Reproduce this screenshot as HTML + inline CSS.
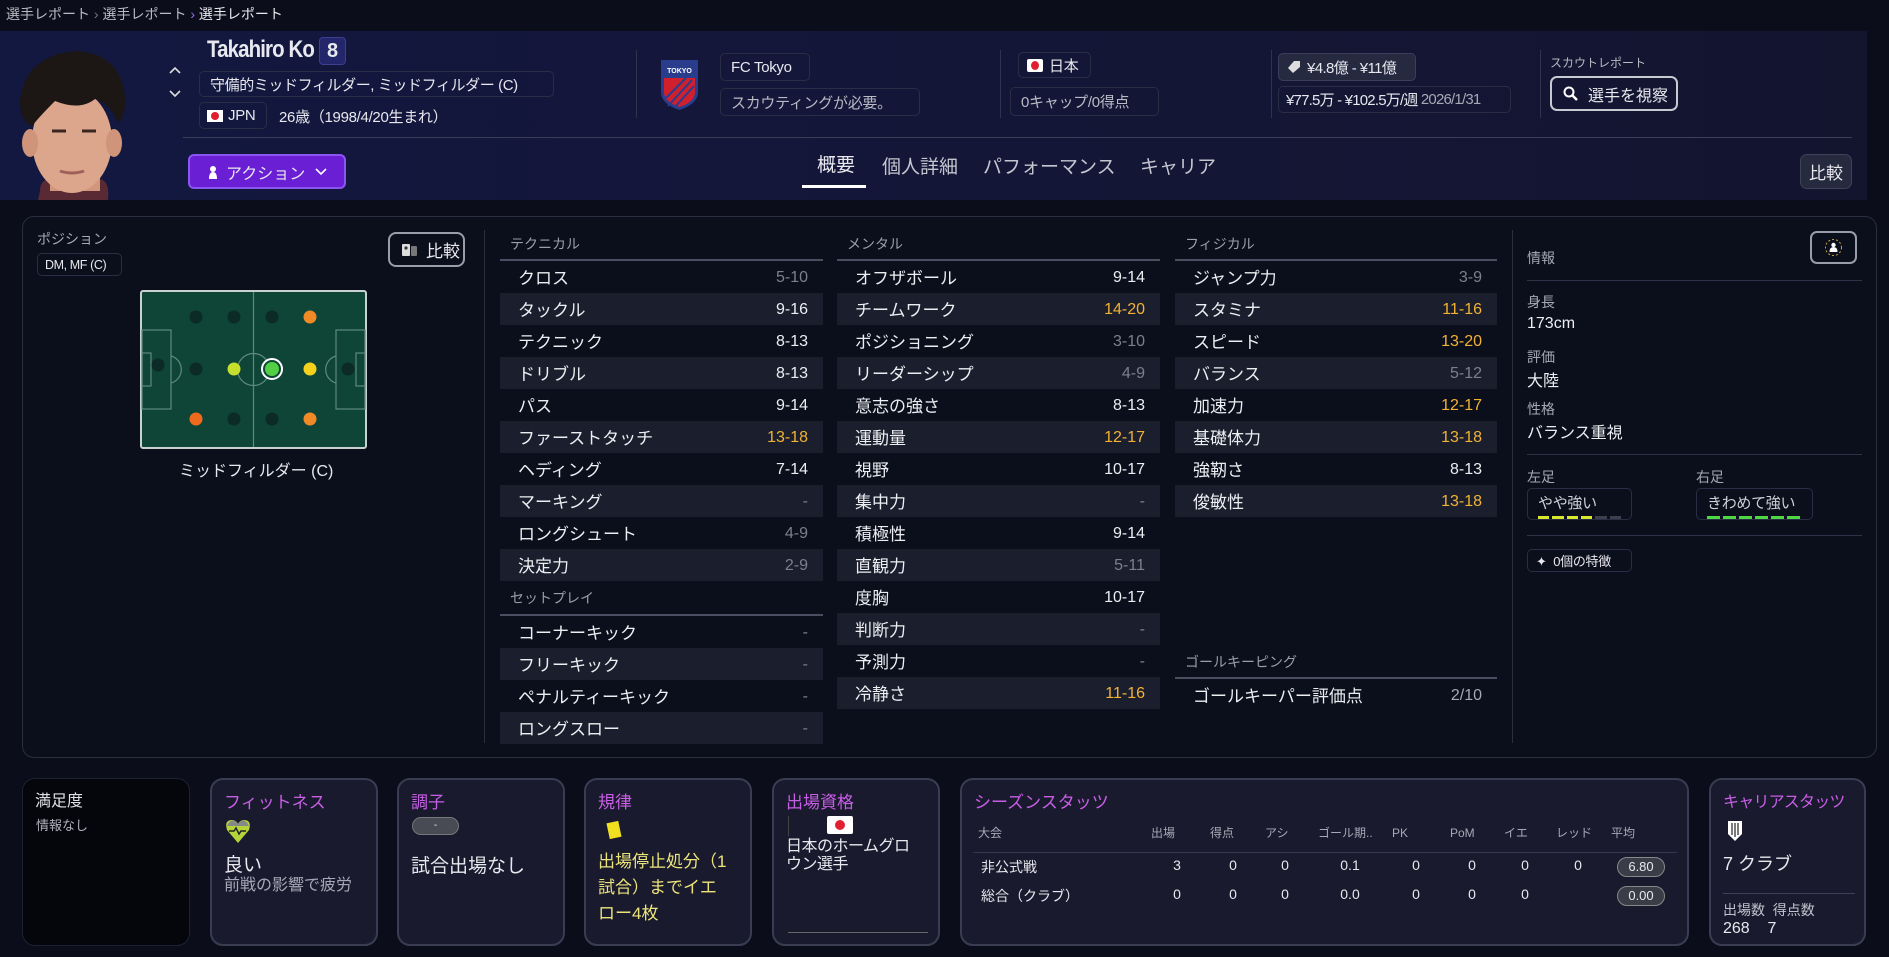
<!DOCTYPE html>
<html><head><meta charset="utf-8">
<style>
*{box-sizing:border-box;margin:0;padding:0}
body{width:1889px;height:957px;background:#0b0e1a;color:#e8e8ee;font-family:"Liberation Sans","Noto Sans CJK JP",sans-serif;position:relative;overflow:hidden;white-space:nowrap}
.a{position:absolute}
.pill{position:absolute;border:1px solid #2a2e44;border-radius:5px;display:flex;align-items:center;padding:0 10px;font-size:15px;color:#e8e8ee;letter-spacing:-0.3px;overflow:hidden}
.sep{position:absolute;width:1px;background:#2e3350}
.col{position:absolute}
.col .h{height:32px;font-size:14px;color:#9a9eab;display:flex;align-items:center;padding-left:10px;border-bottom:2px solid #4a4e60}
.r{height:32px;display:flex;justify-content:space-between;align-items:center;padding:0 15px 0 18px;font-size:17px;color:#eceef2;line-height:32px}
.r span:first-child{position:relative;top:2px}
.r span:last-child{font-size:16px;position:relative;top:1px}
.g{color:#7c808c}.o{color:#f2b335}
.card{position:absolute;top:778px;height:168px;background:#1a1a2e;border:2px solid #3a3c52;border-radius:13px;overflow:hidden}
.ct{position:absolute;left:12px;top:8px;font-size:17px;color:#c85ee6}
.lbl{font-size:14px;color:#a6a9b5;position:absolute}
.val{font-size:16px;color:#eceef2;position:absolute}
.th{position:absolute;top:826px;font-size:12px;color:#a6a9b5;line-height:14px}
.td{position:absolute;font-size:14px;color:#e8e8ee;transform:translateX(-50%)}
</style></head><body>
<div class="a" style="left:6px;top:4px;font-size:14px;color:#b8bac4">選手レポート <span style="color:#777">›</span> 選手レポート <span style="color:#9b6cf0">›</span> <span style="color:#e8e8ee">選手レポート</span></div>

<div class="a" style="left:0;top:31px;width:1867px;height:169px;background:linear-gradient(90deg,#121840 0%,#14163a 40%,#13152f 100%)"></div>
<svg class="a" style="left:0;top:31px" width="150" height="169" viewBox="0 0 150 169">
<path d="M40 160 Q40 150 48 148 L100 148 Q110 150 108 169 L38 169Z" fill="#5a2a34"/>
<rect x="50" y="120" width="50" height="40" fill="#d2967c"/>
<ellipse cx="72" cy="110" rx="40" ry="52" fill="#dca68c"/>
<ellipse cx="30" cy="112" rx="8" ry="14" fill="#cf9479"/>
<ellipse cx="114" cy="112" rx="8" ry="14" fill="#cf9479"/>
<path d="M20 70 Q25 25 75 20 Q120 22 125 65 Q126 85 118 92 Q110 72 95 68 Q80 80 55 70 Q40 85 32 95 Q20 90 20 70Z" fill="#1c1614"/>
<path d="M52 100 h14 M82 100 h14" stroke="#3a2420" stroke-width="3"/>
<path d="M60 140 q12 4 24 0" stroke="#a0605a" stroke-width="3" fill="none"/>
</svg>
<svg class="a" style="left:168px;top:66px" width="14" height="10"><path d="M2 7l5-5 5 5" stroke="#ddd" stroke-width="1.6" fill="none"/></svg>
<svg class="a" style="left:168px;top:89px" width="14" height="10"><path d="M2 2l5 5 5-5" stroke="#ddd" stroke-width="1.6" fill="none"/></svg>

<div class="a" style="left:207px;top:36px;font-size:24px;font-weight:bold;letter-spacing:-1px;transform:scaleX(.85);transform-origin:left">Takahiro Ko</div>
<div class="a" style="left:319px;top:37px;width:27px;height:28px;background:#23266a;border:1px solid #3b4090;border-radius:4px;font-size:20px;font-weight:bold;display:flex;align-items:center;justify-content:center">8</div>
<div class="pill" style="left:199px;top:71px;width:355px;height:26px;font-size:15px;letter-spacing:-0.4px">守備的ミッドフィルダー, ミッドフィルダー (C)</div>
<div class="pill" style="left:199px;top:102px;width:68px;height:27px;padding:0 7px"><span style="display:inline-block;width:16px;height:12px;background:#fff;position:relative;margin-right:5px;flex:none"><span style="position:absolute;left:4px;top:2px;width:8px;height:8px;border-radius:50%;background:#e02030"></span></span>JPN</div>
<div class="a" style="left:279px;top:106px;font-size:15px;letter-spacing:-0.3px">26歳（1998/4/20生まれ）</div>

<div class="sep" style="left:636px;top:50px;height:68px"></div>
<svg class="a" style="left:660px;top:58px" width="39" height="53" viewBox="0 0 39 53"><path d="M1 2h37v32q0 12-18.5 18Q1 46 1 34Z" fill="#2a3c8c"/><path d="M4 20h31v14q0 10-15.5 15Q4 44 4 34Z" fill="#d0202e"/><path d="M8 48L32 22M14 50L34 28M6 40L26 20" stroke="#2a3c8c" stroke-width="2"/><text x="19.5" y="15" font-size="7" fill="#fff" text-anchor="middle" font-weight="bold" font-family="Liberation Sans">TOKYO</text></svg>
<div class="pill" style="left:720px;top:53px;width:90px;height:28px">FC Tokyo</div>
<div class="pill" style="left:720px;top:88px;width:200px;height:28px;color:#b8bac4">スカウティングが必要。</div>

<div class="sep" style="left:1000px;top:50px;height:68px"></div>
<div class="pill" style="left:1018px;top:52px;width:73px;height:26px;padding:0 8px"><span style="display:inline-block;width:16px;height:13px;background:#fff;position:relative;margin-right:6px;border-radius:2px;flex:none"><span style="position:absolute;left:4px;top:2px;width:8px;height:9px;border-radius:50%;background:#e02030"></span></span>日本</div>
<div class="pill" style="left:1010px;top:87px;width:149px;height:29px;color:#b8bac4">0キャップ/0得点</div>

<div class="sep" style="left:1271px;top:50px;height:68px"></div>
<div class="pill" style="left:1278px;top:53px;width:138px;height:28px;background:#262a40;border-color:#3a3e58;padding:0 8px;font-size:15px;letter-spacing:-0.6px"><svg width="14" height="14" style="margin-right:6px;flex:none"><path d="M7 1h6v6L6 13 1 8Z" fill="#ddd"/></svg>¥4.8億 - ¥11億</div>
<div class="pill" style="left:1278px;top:86px;width:233px;height:27px;padding:0 7px;font-size:15px;letter-spacing:-0.8px">¥77.5万 - ¥102.5万/週&nbsp;<span style="color:#a6a9b5">2026/1/31</span></div>

<div class="sep" style="left:1540px;top:50px;height:68px"></div>
<div class="a" style="left:1550px;top:54px;font-size:12px;color:#b8bac4">スカウトレポート</div>
<div class="a" style="left:1550px;top:76px;width:128px;height:35px;border:2px solid #c8cad2;border-radius:7px;display:flex;align-items:center;padding-left:11px;font-size:16px"><svg width="16" height="16" style="margin-right:9px"><circle cx="6" cy="6" r="4.5" stroke="#fff" stroke-width="2" fill="none"/><path d="M9 9l5 5" stroke="#fff" stroke-width="2.5"/></svg>選手を視察</div>

<div class="a" style="left:183px;top:137px;width:1669px;height:1px;background:#3a3e58"></div>
<div class="a" style="left:188px;top:154px;width:158px;height:35px;background:#6a1fd4;border:2px solid #8b55f2;border-radius:6px;display:flex;align-items:center;padding-left:18px;font-size:16px"><svg width="10" height="14" style="margin-right:8px"><circle cx="5" cy="4" r="3" fill="#fff"/><path d="M1 14q0-7 4-7 4 0 4 7Z" fill="#fff"/></svg>アクション<svg width="12" height="8" style="margin-left:10px"><path d="M1 1l5 5 5-5" stroke="#fff" stroke-width="1.6" fill="none"/></svg></div>
<div class="a" style="left:817px;top:150px;font-size:19px">概要</div>
<div class="a" style="left:802px;top:185px;width:64px;height:3px;background:#fff"></div>
<div class="a" style="left:882px;top:152px;font-size:19px;color:#c4c6d0">個人詳細</div>
<div class="a" style="left:983px;top:152px;font-size:19px;color:#c4c6d0">パフォーマンス</div>
<div class="a" style="left:1140px;top:152px;font-size:19px;color:#c4c6d0">キャリア</div>
<div class="a" style="left:1800px;top:154px;width:52px;height:35px;background:#262a3e;border:1px solid #3e4258;border-radius:7px;display:flex;align-items:center;justify-content:center;font-size:17px">比較</div>

<div class="a" style="left:22px;top:216px;width:1855px;height:542px;border:1px solid #2a2e40;border-radius:12px;background:#0b0e1b"></div>
<div class="a" style="left:37px;top:229px;font-size:14px;color:#a6a9b5">ポジション</div>
<div class="pill" style="left:37px;top:253px;width:85px;height:23px;font-size:12.5px;padding:0 7px;letter-spacing:-0.4px">DM, MF (C)</div>
<div class="a" style="left:388px;top:232px;width:77px;height:35px;border:2px solid #9a9cab;border-radius:8px;display:flex;align-items:center;padding-left:12px;font-size:17px"><svg width="16" height="14" style="margin-right:8px"><rect x="0" y="1" width="8" height="12" rx="1" fill="#ddd"/><rect x="9" y="3" width="6" height="10" rx="1" fill="#777"/><circle cx="4" cy="5" r="1.6" fill="#333"/></svg>比較</div>
<svg class="a" style="left:140px;top:290px" width="227" height="159" viewBox="0 0 227 159">
<rect x="1" y="1" width="225" height="157" rx="2" fill="#0e4536" stroke="#c8d0d0" stroke-width="2"/>
<g stroke="#5e8a80" stroke-width="1.2" fill="none"><line x1="113.5" y1="2" x2="113.5" y2="157"/><circle cx="113.5" cy="79.5" r="16"/><rect x="2" y="40" width="29" height="79"/><rect x="2" y="63" width="9" height="33"/><rect x="196" y="40" width="29" height="79"/><rect x="216" y="63" width="9" height="33"/><path d="M31 66a14 14 0 0 1 0 27M196 66a14 14 0 0 0 0 27"/></g>
<g fill="#0c2a26"><circle cx="56" cy="27" r="6.5"/><circle cx="94" cy="27" r="6.5"/><circle cx="132" cy="27" r="6.5"/><circle cx="18" cy="75" r="6.5"/><circle cx="56" cy="79" r="6.5"/><circle cx="208" cy="79" r="6.5"/><circle cx="94" cy="129" r="6.5"/><circle cx="132" cy="129" r="6.5"/></g>
<circle cx="170" cy="27" r="6.5" fill="#f08a26"/><circle cx="56" cy="129" r="6.5" fill="#f06a1e"/><circle cx="170" cy="129" r="6.5" fill="#f08a26"/>
<circle cx="94" cy="79" r="6.5" fill="#c6df2c"/><circle cx="170" cy="79" r="6.5" fill="#f5d01c"/>
<circle cx="132" cy="79" r="10" fill="#0e4536" stroke="#fff" stroke-width="2"/><circle cx="132" cy="79" r="7" fill="#52d045"/>
</svg>
<div class="a" style="left:179px;top:457px;font-size:16px">ミッドフィルダー (C)</div>
<div class="sep" style="left:484px;top:230px;height:513px;background:#2a2e40"></div>

<div class="col" style="left:500px;top:229px;width:323px">
<div class="h">テクニカル</div>
<div><div class="r"><span>クロス</span><span class="g">5-10</span></div><div class="r" style="background:#1b1e2c"><span>タックル</span><span>9-16</span></div><div class="r"><span>テクニック</span><span>8-13</span></div><div class="r" style="background:#1b1e2c"><span>ドリブル</span><span>8-13</span></div><div class="r"><span>パス</span><span>9-14</span></div><div class="r" style="background:#1b1e2c"><span>ファーストタッチ</span><span class="o">13-18</span></div><div class="r"><span>ヘディング</span><span>7-14</span></div><div class="r" style="background:#1b1e2c"><span>マーキング</span><span class="g">-</span></div><div class="r"><span>ロングシュート</span><span class="g">4-9</span></div><div class="r" style="background:#1b1e2c"><span>決定力</span><span class="g">2-9</span></div></div>
<div class="h" style="height:35px">セットプレイ</div>
<div><div class="r"><span>コーナーキック</span><span class="g">-</span></div><div class="r" style="background:#1b1e2c"><span>フリーキック</span><span class="g">-</span></div><div class="r"><span>ペナルティーキック</span><span class="g">-</span></div><div class="r" style="background:#1b1e2c"><span>ロングスロー</span><span class="g">-</span></div></div>
</div>

<div class="col" style="left:837px;top:229px;width:323px">
<div class="h">メンタル</div>
<div><div class="r"><span>オフザボール</span><span>9-14</span></div><div class="r" style="background:#1b1e2c"><span>チームワーク</span><span class="o">14-20</span></div><div class="r"><span>ポジショニング</span><span class="g">3-10</span></div><div class="r" style="background:#1b1e2c"><span>リーダーシップ</span><span class="g">4-9</span></div><div class="r"><span>意志の強さ</span><span>8-13</span></div><div class="r" style="background:#1b1e2c"><span>運動量</span><span class="o">12-17</span></div><div class="r"><span>視野</span><span>10-17</span></div><div class="r" style="background:#1b1e2c"><span>集中力</span><span class="g">-</span></div><div class="r"><span>積極性</span><span>9-14</span></div><div class="r" style="background:#1b1e2c"><span>直観力</span><span class="g">5-11</span></div><div class="r"><span>度胸</span><span>10-17</span></div><div class="r" style="background:#1b1e2c"><span>判断力</span><span class="g">-</span></div><div class="r"><span>予測力</span><span class="g">-</span></div><div class="r" style="background:#1b1e2c"><span>冷静さ</span><span class="o">11-16</span></div></div>
</div>

<div class="col" style="left:1175px;top:229px;width:322px">
<div class="h">フィジカル</div>
<div><div class="r"><span>ジャンプ力</span><span class="g">3-9</span></div><div class="r" style="background:#1b1e2c"><span>スタミナ</span><span class="o">11-16</span></div><div class="r"><span>スピード</span><span class="o">13-20</span></div><div class="r" style="background:#1b1e2c"><span>バランス</span><span class="g">5-12</span></div><div class="r"><span>加速力</span><span class="o">12-17</span></div><div class="r" style="background:#1b1e2c"><span>基礎体力</span><span class="o">13-18</span></div><div class="r"><span>強靭さ</span><span>8-13</span></div><div class="r" style="background:#1b1e2c"><span>俊敏性</span><span class="o">13-18</span></div></div>
</div>
<div class="col" style="left:1175px;top:647px;width:322px">
<div class="h">ゴールキーピング</div>
<div class="r"><span>ゴールキーパー評価点</span><span style="color:#a6a9b5">2/10</span></div>
</div>

<div class="sep" style="left:1512px;top:230px;height:513px;background:#2a2e40"></div>
<div class="lbl" style="left:1527px;top:248px">情報</div>
<div class="a" style="left:1810px;top:231px;width:47px;height:33px;border:2px solid #9a9cab;border-radius:7px"><svg width="43" height="29"><circle cx="21.5" cy="14.5" r="8" stroke="#c8a040" stroke-width="1" stroke-dasharray="2 2" fill="none"/><circle cx="21.5" cy="12" r="2.2" fill="#fff"/><path d="M17.5 19q0-5 4-5 4 0 4 5Z" fill="#fff"/></svg></div>
<div class="a" style="left:1527px;top:280px;width:335px;height:1px;background:#2e3246"></div>
<div class="lbl" style="left:1527px;top:292px">身長</div><div class="val" style="left:1527px;top:315px">173cm</div>
<div class="lbl" style="left:1527px;top:347px">評価</div><div class="val" style="left:1527px;top:367px">大陸</div>
<div class="lbl" style="left:1527px;top:399px">性格</div><div class="val" style="left:1527px;top:419px">バランス重視</div>
<div class="a" style="left:1527px;top:454px;width:335px;height:1px;background:#2e3246"></div>
<div class="lbl" style="left:1527px;top:467px">左足</div><div class="lbl" style="left:1696px;top:467px">右足</div>
<div class="pill" style="left:1527px;top:488px;width:105px;height:32px;display:block;padding:3px 10px 0;font-size:15px;color:#cfd1d8">やや強い<div style="display:flex;gap:3px;margin-top:3px"><i style="width:12px;height:5px;background:#d8e82a"></i><i style="width:12px;height:5px;background:#d8e82a"></i><i style="width:12px;height:5px;background:#d8e82a"></i><i style="width:12px;height:5px;background:#d8e82a"></i><i style="width:12px;height:5px;background:#3c404e"></i><i style="width:12px;height:5px;background:#3c404e"></i></div></div>
<div class="pill" style="left:1696px;top:488px;width:117px;height:32px;display:block;padding:3px 10px 0;font-size:15px;color:#cfd1d8">きわめて強い<div style="display:flex;gap:3px;margin-top:3px"><i style="width:13px;height:5px;background:#4cd840"></i><i style="width:13px;height:5px;background:#4cd840"></i><i style="width:13px;height:5px;background:#4cd840"></i><i style="width:13px;height:5px;background:#4cd840"></i><i style="width:13px;height:5px;background:#4cd840"></i><i style="width:13px;height:5px;background:#4cd840"></i></div></div>
<div class="a" style="left:1527px;top:535px;width:335px;height:1px;background:#2e3246"></div>
<div class="pill" style="left:1527px;top:549px;width:105px;height:23px;font-size:13px;padding:0 8px">✦&nbsp; 0個の特徴</div>

<div class="card" style="left:22px;width:168px;background:#05060c;border:1px solid #1e2132"><div class="ct" style="color:#e0e0e6;font-size:16px">満足度</div><div class="a" style="left:13px;top:36px;font-size:13px;color:#b0b2bc">情報なし</div></div>
<div class="card" style="left:210px;width:168px"><div class="ct">フィットネス</div>
<svg class="a" style="left:13px;top:38px" width="26" height="26"><path d="M13 25L2 12Q-1 2 7 2q4 0 6 4 2-4 6-4 8 0 5 10Z" fill="#b4d43a"/><path d="M2 8Q5 1 10 3 13 5 13 6 13 5 16 3 21 1 24 8Z" fill="#888"/><path d="M4 13h5l2-3 3 6 2-3h5" stroke="#222" stroke-width="1.5" fill="none"/></svg>
<div class="a" style="left:12px;top:70px;font-size:19px">良い</div><div class="a" style="left:12px;top:91px;font-size:16px;color:#a6a9b5">前戦の影響で疲労</div></div>
<div class="card" style="left:397px;width:168px"><div class="ct">調子</div><div class="a" style="left:13px;top:37px;width:47px;height:18px;border-radius:9px;background:#484a54;border:1px solid #777;text-align:center;font-size:10px;line-height:15px">-</div><div class="a" style="left:12px;top:71px;font-size:19px">試合出場なし</div></div>
<div class="card" style="left:584px;width:168px"><div class="ct">規律</div><div class="a" style="left:22px;top:42px;width:12px;height:16px;background:#f0e020;transform:rotate(-12deg)"></div><div class="a" style="left:12px;top:69px;font-size:17px;line-height:26px;color:#ece47a;width:132px;white-space:normal">出場停止処分（1試合）までイエロー4枚</div></div>
<div class="card" style="left:772px;width:168px"><div class="ct">出場資格</div><div class="a" style="left:14px;top:36px;width:1px;height:20px;background:#444"></div><div class="a" style="left:53px;top:36px;width:26px;height:18px;background:#fff;border-radius:2px"><div style="position:absolute;left:8px;top:4px;width:10px;height:10px;border-radius:50%;background:#e02030"></div></div><div class="a" style="left:12px;top:58px;font-size:16px;line-height:18px;width:134px;white-space:normal;letter-spacing:-0.5px">日本のホームグロウン選手</div><div class="a" style="left:14px;top:152px;width:140px;height:1px;background:#666"></div></div>

<div class="card" style="left:960px;width:729px"><div class="ct">シーズンスタッツ</div></div>
<div class="th" style="left:978px">大会</div><div class="th" style="left:1151px">出場</div><div class="th" style="left:1210px">得点</div><div class="th" style="left:1265px">アシ</div><div class="th" style="left:1318px">ゴール期..</div><div class="th" style="left:1392px">PK</div><div class="th" style="left:1450px">PoM</div><div class="th" style="left:1504px">イエ</div><div class="th" style="left:1556px">レッド</div><div class="th" style="left:1611px">平均</div>
<div class="a" style="left:973px;top:852px;width:704px;height:1px;background:#353850"></div>
<div class="a" style="left:981px;top:857px;font-size:14px">非公式戦</div>
<div class="td" style="left:1177px;top:857px">3</div><div class="td" style="left:1233px;top:857px">0</div><div class="td" style="left:1285px;top:857px">0</div><div class="td" style="left:1350px;top:857px">0.1</div><div class="td" style="left:1416px;top:857px">0</div><div class="td" style="left:1472px;top:857px">0</div><div class="td" style="left:1525px;top:857px">0</div><div class="td" style="left:1578px;top:857px">0</div>
<div class="a" style="left:1617px;top:857px;width:48px;height:20px;border-radius:10px;background:#3a3c48;border:1px solid #888;font-size:13px;text-align:center;line-height:18px">6.80</div>
<div class="a" style="left:981px;top:886px;font-size:14px">総合（クラブ）</div>
<div class="td" style="left:1177px;top:886px">0</div><div class="td" style="left:1233px;top:886px">0</div><div class="td" style="left:1285px;top:886px">0</div><div class="td" style="left:1350px;top:886px">0.0</div><div class="td" style="left:1416px;top:886px">0</div><div class="td" style="left:1472px;top:886px">0</div><div class="td" style="left:1525px;top:886px">0</div>
<div class="a" style="left:1617px;top:886px;width:48px;height:20px;border-radius:10px;background:#3a3c48;border:1px solid #888;font-size:13px;text-align:center;line-height:18px">0.00</div>

<div class="card" style="left:1709px;width:157px"><div class="ct" style="font-size:16px;letter-spacing:-0.8px">キャリアスタッツ</div>
<svg class="a" style="left:16px;top:40px" width="16" height="22"><path d="M1 1h14v13l-7 7-7-7Z" fill="#fff"/><path d="M5 3v12M8 3v14M11 3v12" stroke="#333" stroke-width="1.3"/></svg>
<div class="a" style="left:12px;top:70px;font-size:18px">7 クラブ</div>
<div class="a" style="left:12px;top:113px;width:132px;height:1px;background:#3e4058"></div>
<div class="a" style="left:12px;top:120px;font-size:14px;color:#c0c2cc">出場数&nbsp; 得点数</div>
<div class="a" style="left:12px;top:140px;font-size:16px">268&nbsp;&nbsp;&nbsp; 7</div></div>
</body></html>
